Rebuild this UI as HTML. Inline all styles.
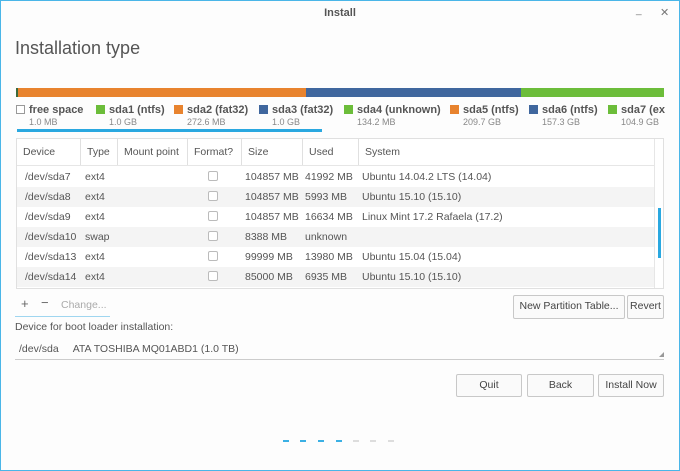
<!DOCTYPE html>
<html><head><style>
*{margin:0;padding:0;box-sizing:border-box}
body{width:680px;height:471px;background:#fdfdfd;font-family:"Liberation Sans",sans-serif;color:#444;position:relative;overflow:hidden}
.frame{position:absolute;left:0;top:0;width:680px;height:471px;border:1px solid #4ab6e8;pointer-events:none}
.a{position:absolute;white-space:nowrap}
.title{left:0;width:680px;top:7px;text-align:center;font-size:11px;font-weight:bold;color:#555}
h1{position:absolute;left:15px;top:38px;font-size:18px;font-weight:normal;color:#555}
.bar{position:absolute;top:88px;height:9px}
.lg{top:104px;font-size:11px;font-weight:bold;color:#555}
.lg i{display:inline-block;width:9px;height:9px;margin-right:4px;vertical-align:-1px}
.sz{top:117px;font-size:9px;color:#888}
.tbl{position:absolute;left:16px;top:138px;width:648px;height:151px;border:1px solid #e0e0e0;background:#fff;overflow:hidden}
.hd{position:absolute;top:0;height:27px;line-height:27px;font-size:10.5px;color:#555;padding-left:6px;border-right:1px solid #e0e0e0}
.row{position:absolute;left:0;width:637px;height:20px;font-size:10.5px;color:#555}
.row span{position:absolute;top:4px}
.cb{position:absolute;left:191px;top:4px;width:10px;height:10px;border:1px solid #bbb;border-radius:2px;background:#fff}
.btn{position:absolute;border:1px solid #c8c8c8;border-radius:2px;background:#fafafa;font-size:10.5px;color:#444;text-align:center;line-height:21px}
.d{position:absolute;top:440px;width:6px;height:2px}
</style></head><body>
<div class="a title">Install</div>
<div class="a" style="left:636px;top:5px;font-size:10px;color:#777">_</div>
<div class="a" style="left:660px;top:6px;font-size:11px;color:#777">✕</div>
<h1>Installation type</h1>
<div class="bar" style="left:16px;width:2px;background:#3c6a3c"></div>
<div class="bar" style="left:18px;width:288px;background:#e8832e"></div>
<div class="bar" style="left:306px;width:215px;background:#40679e"></div>
<div class="bar" style="left:521px;width:143px;background:#6cbd3a"></div>
<div class="a lg" style="left:16px"><i style="border:1px solid #999;background:#fff"></i>free space</div>
<div class="a lg" style="left:96px"><i style="background:#6cbd3a"></i>sda1 (ntfs)</div>
<div class="a lg" style="left:174px"><i style="background:#e8832e"></i>sda2 (fat32)</div>
<div class="a lg" style="left:259px"><i style="background:#40679e"></i>sda3 (fat32)</div>
<div class="a lg" style="left:344px"><i style="background:#6cbd3a"></i>sda4 (unknown)</div>
<div class="a lg" style="left:450px"><i style="background:#e8832e"></i>sda5 (ntfs)</div>
<div class="a lg" style="left:529px"><i style="background:#40679e"></i>sda6 (ntfs)</div>
<div class="a lg" style="left:608px"><i style="background:#6cbd3a"></i>sda7 (ex</div>
<div class="a sz" style="left:29px">1.0 MB</div>
<div class="a sz" style="left:109px">1.0 GB</div>
<div class="a sz" style="left:187px">272.6 MB</div>
<div class="a sz" style="left:272px">1.0 GB</div>
<div class="a sz" style="left:357px">134.2 MB</div>
<div class="a sz" style="left:463px">209.7 GB</div>
<div class="a sz" style="left:542px">157.3 GB</div>
<div class="a sz" style="left:621px">104.9 GB</div>
<div class="a" style="left:17px;top:129px;width:305px;height:3px;background:#2aa8e0"></div>
<div class="tbl">
<div class="hd" style="left:0;width:64px">Device</div>
<div class="hd" style="left:64px;width:37px">Type</div>
<div class="hd" style="left:101px;width:70px">Mount point</div>
<div class="hd" style="left:171px;width:54px">Format?</div>
<div class="hd" style="left:225px;width:61px">Size</div>
<div class="hd" style="left:286px;width:56px">Used</div>
<div class="hd" style="left:342px;width:295px;border:none">System</div>
<div style="position:absolute;left:0;top:26px;width:637px;height:1px;background:#e6e6e6"></div>
<div style="position:absolute;left:637px;top:0;width:1px;height:151px;background:#e6e6e6"></div>
<div style="position:absolute;left:641px;top:69px;width:3px;height:50px;background:#2aa8e0"></div>
<div class="row" style="top:28px"><span style="left:8px">/dev/sda7</span><span style="left:68px">ext4</span><i class="cb"></i><span style="left:228px">104857 MB</span><span style="left:288px">41992 MB</span><span style="left:345px">Ubuntu 14.04.2 LTS (14.04)</span></div>
<div class="row" style="top:48px;background:#f4f4f4"><span style="left:8px">/dev/sda8</span><span style="left:68px">ext4</span><i class="cb"></i><span style="left:228px">104857 MB</span><span style="left:288px">5993 MB</span><span style="left:345px">Ubuntu 15.10 (15.10)</span></div>
<div class="row" style="top:68px"><span style="left:8px">/dev/sda9</span><span style="left:68px">ext4</span><i class="cb"></i><span style="left:228px">104857 MB</span><span style="left:288px">16634 MB</span><span style="left:345px">Linux Mint 17.2 Rafaela (17.2)</span></div>
<div class="row" style="top:88px;background:#f4f4f4"><span style="left:8px">/dev/sda10</span><span style="left:68px">swap</span><i class="cb"></i><span style="left:228px">8388 MB</span><span style="left:288px">unknown</span></div>
<div class="row" style="top:108px"><span style="left:8px">/dev/sda13</span><span style="left:68px">ext4</span><i class="cb"></i><span style="left:228px">99999 MB</span><span style="left:288px">13980 MB</span><span style="left:345px">Ubuntu 15.04 (15.04)</span></div>
<div class="row" style="top:128px;background:#f4f4f4"><span style="left:8px">/dev/sda14</span><span style="left:68px">ext4</span><i class="cb"></i><span style="left:228px">85000 MB</span><span style="left:288px">6935 MB</span><span style="left:345px">Ubuntu 15.10 (15.10)</span></div>
</div>
<div class="a" style="left:21px;top:296px;font-size:13px;color:#666">+</div>
<div class="a" style="left:41px;top:295px;font-size:13px;color:#666">−</div>
<div class="a" style="left:61px;top:299px;font-size:10.5px;color:#aaa">Change...</div>
<div class="a" style="left:15px;top:316px;width:95px;height:1px;background:#9fd6f0"></div>
<div class="btn" style="left:513px;top:295px;width:112px;height:24px">New Partition Table...</div>
<div class="btn" style="left:627px;top:295px;width:37px;height:24px">Revert</div>
<div class="a" style="left:15px;top:321px;font-size:10.5px;color:#555">Device for boot loader installation:</div>
<div class="a" style="left:19px;top:343px;font-size:10.5px;color:#555">/dev/sda&nbsp;&nbsp;&nbsp;&nbsp; ATA TOSHIBA MQ01ABD1 (1.0 TB)</div>
<div class="a" style="left:15px;top:359px;width:649px;height:1px;background:#ccc"></div>
<div class="a" style="left:659px;top:352px;width:0;height:0;border-left:5px solid transparent;border-bottom:5px solid #999"></div>
<div class="btn" style="left:456px;top:374px;width:66px;height:23px">Quit</div>
<div class="btn" style="left:527px;top:374px;width:67px;height:23px">Back</div>
<div class="btn" style="left:598px;top:374px;width:66px;height:23px">Install Now</div>
<div class="d" style="left:283px;background:#3bb0e4"></div>
<div class="d" style="left:300px;background:#3bb0e4"></div>
<div class="d" style="left:318px;background:#3bb0e4"></div>
<div class="d" style="left:336px;background:#3bb0e4"></div>
<div class="d" style="left:353px;background:#ddd"></div>
<div class="d" style="left:370px;background:#ddd"></div>
<div class="d" style="left:388px;background:#ddd"></div>
<div class="frame"></div>
</body></html>
